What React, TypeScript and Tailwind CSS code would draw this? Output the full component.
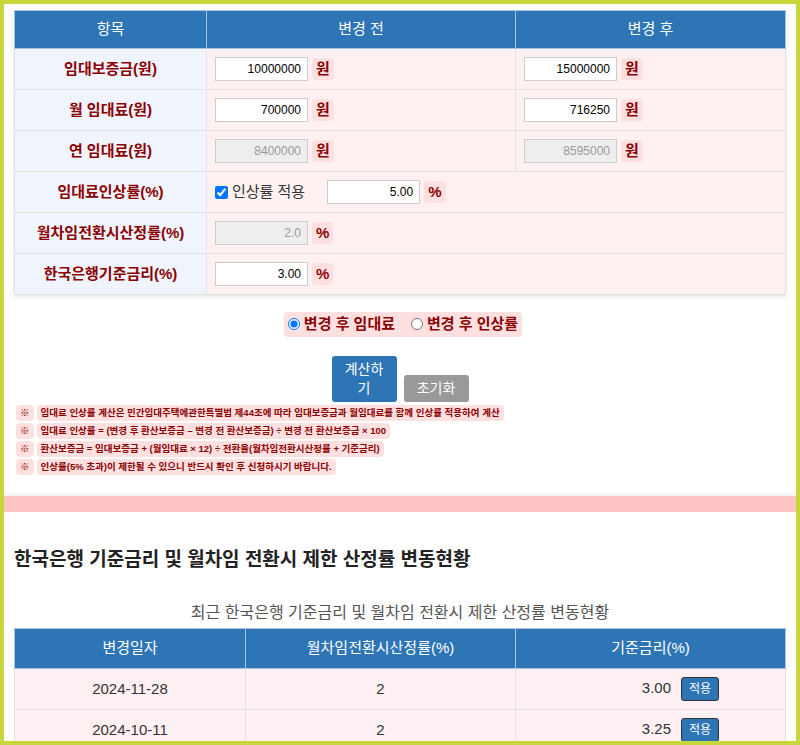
const font = { fontFamily: '"Liberation Sans", "Noto Sans CJK KR", sans-serif' };

const Unit = ({ t }: { t: string }) => (
  <span className="ml-1 rounded bg-[#ffe0e0] px-1 text-[15px] font-bold text-[#8b0000]">{t}</span>
);

const Inp = ({ v, dis }: { v: string; dis?: boolean }) => (
  <input
    readOnly
    value={v}
    className={`h-[24px] w-[93px] border border-[#ccc] px-1.5 text-right text-[12px] ${dis ? "bg-[#eee] text-[#999]" : "bg-white text-black"}`}
  />
);

const rows: { label: string; before: React.ReactNode; after?: React.ReactNode }[] = [
  { label: "임대보증금(원)", before: <><Inp v="10000000" /><Unit t="원" /></>, after: <><Inp v="15000000" /><Unit t="원" /></> },
  { label: "월 임대료(원)", before: <><Inp v="700000" /><Unit t="원" /></>, after: <><Inp v="716250" /><Unit t="원" /></> },
  { label: "연 임대료(원)", before: <><Inp v="8400000" dis /><Unit t="원" /></>, after: <><Inp v="8595000" dis /><Unit t="원" /></> },
  {
    label: "임대료인상률(%)",
    before: (
      <>
        <input type="checkbox" defaultChecked className="mr-1 h-[13px] w-[13px]" />
        <span className="mr-[22px] text-[15px] text-[#333]">인상률 적용</span>
        <Inp v="5.00" />
        <Unit t="%" />
      </>
    ),
  },
  { label: "월차임전환시산정률(%)", before: <><Inp v="2.0" dis /><Unit t="%" /></> },
  { label: "한국은행기준금리(%)", before: <><Inp v="3.00" /><Unit t="%" /></> },
];

const notes = [
  "임대료 인상률 계산은 민간임대주택에관한특별법 제44조에 따라 임대보증금과 월임대료를 함께 인상률 적용하여 계산",
  "임대료 인상률 = (변경 후 환산보증금 – 변경 전 환산보증금) ÷ 변경 전 환산보증금 × 100",
  "환산보증금 = 임대보증금 + (월임대료 × 12) ÷ 전환율(월차임전환시산정률 + 기준금리)",
  "인상률(5% 초과)이 제한될 수 있으니 반드시 확인 후 신청하시기 바랍니다.",
];

export default function App() {
  return (
    <div style={font} className="h-[745px] w-[800px] overflow-hidden border-4 border-[#c6d63c] bg-white">
      <div className="px-[10px] pt-[6px]">
        <table className="w-full border-collapse shadow-[0_2px_4px_rgba(0,0,0,0.1)]">
          <thead>
            <tr className="h-[38px] bg-[#2e75b6] text-[15px] font-normal text-white">
              <th className="w-[192px] border border-[#a8c4e0] font-normal">항목</th>
              <th className="w-[309px] border border-[#a8c4e0] font-normal">변경 전</th>
              <th className="border border-[#a8c4e0] font-normal">변경 후</th>
            </tr>
          </thead>
          <tbody>
            {rows.map((r) => (
              <tr key={r.label} className="h-[41px]">
                <td className="border border-[#e2e2e2] bg-[#f0f4fc] text-center text-[15px] font-bold text-[#8b0000]">{r.label}</td>
                <td colSpan={r.after ? 1 : 2} className="border border-[#e2e2e2] bg-[#fff0f2] px-2">
                  <div className="flex items-center">{r.before}</div>
                </td>
                {r.after && (
                  <td className="border border-[#e2e2e2] bg-[#fff0f2] px-2">
                    <div className="flex items-center">{r.after}</div>
                  </td>
                )}
              </tr>
            ))}
          </tbody>
        </table>

        <div className="mt-[17px] flex justify-center">
          <div className="ml-[6px] flex items-center rounded bg-[#ffe0e0] px-1 py-[1px] text-[15px] font-bold text-[#8b0000]">
            <input type="radio" name="m" defaultChecked className="mr-1 h-[12px] w-[12px]" />
            <span className="mr-4">변경 후 임대료</span>
            <input type="radio" name="m" className="mr-1 h-[12px] w-[12px]" />
            <span>변경 후 인상률</span>
          </div>
        </div>

        <div className="mt-[19px] flex items-end justify-center gap-[7px]">
          <button className="h-[46px] w-[65px] rounded-[3px] bg-[#2e75b6] text-[14px] leading-[19px] text-white">계산하<br />기</button>
          <button className="h-[27px] w-[65px] rounded-[3px] bg-[#999] text-[14px] text-white">초기화</button>
        </div>

        <div className="mt-[3px] flex flex-col gap-[2px] pl-[2px]">
          {notes.map((n) => (
            <div key={n} className="flex text-[9.5px] font-bold leading-[16px] text-[#8b0000]">
              <span className="mr-[3px] rounded bg-[#ffe0e0] px-1">※</span>
              <span className="rounded bg-[#ffe0e0] px-1">{n}</span>
            </div>
          ))}
        </div>
      </div>

      <div className="mt-[21px] h-[16px] bg-[#ffc4c4] shadow-[0_-2px_3px_rgba(0,0,0,0.08)]" />

      <div className="px-[10px]">
        <h2 className="mt-[34px] text-[19px] font-bold text-[#222]">한국은행 기준금리 및 월차임 전환시 제한 산정률 변동현황</h2>
        <div className="mt-[27px] text-center text-[16px] text-[#555]">최근 한국은행 기준금리 및 월차임 전환시 제한 산정률 변동현황</div>
        <table className="mt-[3px] w-full border-collapse text-[15px]">
          <thead>
            <tr className="h-[40px] bg-[#2e75b6] text-white">
              <th className="w-[231px] border border-[#a8c4e0] font-normal">변경일자</th>
              <th className="w-[270px] border border-[#a8c4e0] font-normal">월차임전환시산정률(%)</th>
              <th className="border border-[#a8c4e0] font-normal">기준금리(%)</th>
            </tr>
          </thead>
          <tbody className="text-[#333]">
            {[
              ["2024-11-28", "2", "3.00"],
              ["2024-10-11", "2", "3.25"],
            ].map((r) => (
              <tr key={r[0]} className="h-[41px] bg-[#fff0f4]">
                <td className="border border-[#e2e2e2] text-center">{r[0]}</td>
                <td className="border border-[#e2e2e2] text-center">{r[1]}</td>
                <td className="border border-[#e2e2e2] text-center">
                  <span className="ml-[60px]">{r[2]}</span>
                  <button className="ml-[10px] rounded-[3px] border border-[#333] bg-[#2e75b6] px-[7px] py-[2px] text-[12px] text-white">적용</button>
                </td>
              </tr>
            ))}
          </tbody>
        </table>
      </div>
    </div>
  );
}
